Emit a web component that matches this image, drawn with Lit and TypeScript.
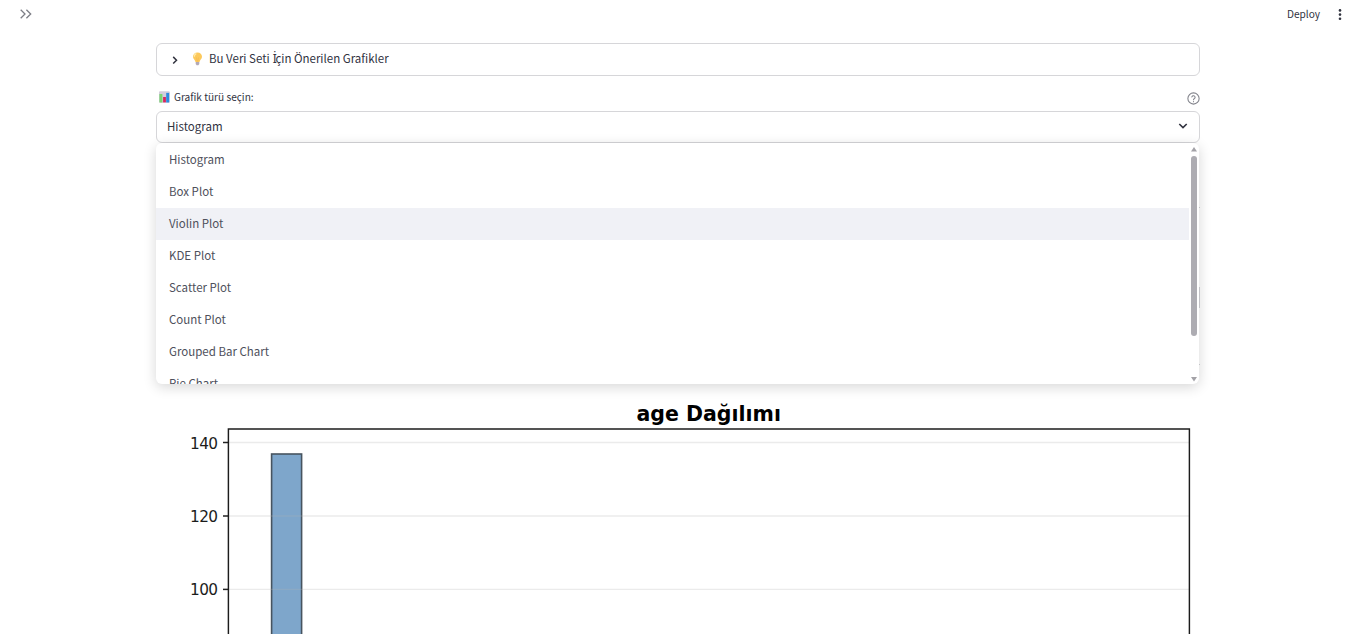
import { LitElement, html, css, svg } from "lit";
import { customElement, property, state } from "lit/decorators.js";
import { classMap } from "lit/directives/class-map.js";

@customElement("histogram-chart")
class HistogramChart extends LitElement {
  static styles = css`
    :host { display: block; height: 238px; overflow: hidden; }
    svg { display: block; }
    text { font-family: "DejaVu Sans", sans-serif; fill: #1c1c1c; }
    .title { font-size: 20.4px; font-weight: 700; fill: #000; }
    .tick { font-size: 15.3px; }
  `;
  render() {
    const ticks = [
      { label: "140", y: 46.5 },
      { label: "120", y: 120 },
      { label: "100", y: 193.4 },
    ];
    return html`<svg width="1044" height="238" viewBox="0 0 1044 238">
      <text class="title" x="480.5" y="25" textLength="144.5" lengthAdjust="spacingAndGlyphs">age Dağılımı</text>
      <rect x="115.6" y="58" width="30" height="200" fill="#7ea6cb" stroke="#47545f" stroke-width="1.6"></rect>
      ${ticks.map(
        (t) => svg`
          <line x1="73" x2="1033" y1=${t.y} y2=${t.y} stroke="#b0b0b0" stroke-opacity=".26" stroke-width="1.4"></line>
          <line x1="67" x2="72" y1=${t.y} y2=${t.y} stroke="#222" stroke-width="1.5"></line>
          <text class="tick" x="62" y=${t.y + 6} text-anchor="end" textLength="28">${t.label}</text>`
      )}
      <path d="M72.4 240V33H1033.4V240" fill="none" stroke="#1c1c1c" stroke-width="1.45"></path>
    </svg>`;
  }
}

@customElement("option-menu")
class OptionMenu extends LitElement {
  @property({ attribute: false }) options: string[] = [];
  @property() highlighted = "";
  static styles = css`
    :host {
      display: flex; box-sizing: border-box; height: 241px; overflow: hidden;
      background: #fff; border-radius: 6px; padding-top: 1px;
      box-shadow: 0 3px 13px rgba(0, 0, 0, 0.16);
    }
    .list { flex: 1; margin: 0; padding: 0; list-style: none; }
    .item {
      height: 32px; line-height: 30px; padding-left: 13px; font-size: 11.5px;
      color: #4e505b; white-space: nowrap;
    }
    .active { background: #f0f1f6; }
    .bar { width: 10px; display: flex; flex-direction: column; align-items: center; padding: 3px 0 2px; box-sizing: border-box; }
    .thumb { width: 6px; height: 180px; margin-top: 4px; border-radius: 3px; background: #adacb2; }
    .down { margin-top: auto; }
    svg { display: block; fill: #a3a2a7; }
  `;
  render() {
    return html`
      <ul class="list">
        ${this.options.map(
          (o) => html`<li class=${classMap({ item: true, active: o === this.highlighted })}>${o}</li>`
        )}
      </ul>
      <div class="bar">
        <svg width="6" height="5"><path d="M3 0L6 4.6H0Z"></path></svg>
        <div class="thumb"></div>
        <svg class="down" width="6" height="5"><path d="M0 0H6L3 4.6Z"></path></svg>
      </div>`;
  }
}

@customElement("app-root")
class AppRoot extends LitElement {
  @state() private selected = "Histogram";
  private options = [
    "Histogram", "Box Plot", "Violin Plot", "KDE Plot", "Scatter Plot",
    "Count Plot", "Grouped Bar Chart", "Pie Chart",
  ];
  static styles = css`
    :host {
      display: block; height: 634px; overflow: hidden; background: #fff; color: #31333f;
      font-family: "Noto Sans CJK SC", "Noto Sans", sans-serif;
    }
    svg { display: block; flex: none; }
    .header { height: 30px; display: flex; align-items: center; justify-content: space-between; padding: 0 20px 2px; box-sizing: border-box; }
    .actions { display: flex; align-items: center; gap: 17px; font-size: 10.1px; }
    .actions span { padding-bottom: 1px; }
    .main { width: 1044px; margin-left: 156px; padding-top: 13px; }
    .expander, .select {
      display: flex; align-items: center; box-sizing: border-box;
      border: 1px solid #d6d6d9; border-radius: 6px; font-size: 11.5px;
    }
    .expander { height: 33px; padding-left: 14px; }
    .expander span, .select span { padding-bottom: 2px; line-height: 17px; }
    .expander .dotted { font-family: "Noto Sans", sans-serif; font-size: 11.8px; line-height: 1; padding: 0; margin: 0 -1.3px 0 0.4px; }
    .bulb { margin: 0 6px 2px 13px; }
    .label { height: 18px; margin-top: 13px; padding-left: 3px; display: flex; align-items: center; font-size: 10.1px; }
    .label span { padding-bottom: 3px; }
    .label .chart { margin: 0 4px 2px 0; }
    .help { margin-left: auto; }
    .select { height: 32px; margin-top: 4px; padding: 0 11px 0 10px; justify-content: space-between; }
    .select svg { margin-bottom: 2px; }
    .stage { position: relative; padding-top: 253px; }
    option-menu { position: absolute; top: 0; left: 0; width: 1043px; }
    .behind { position: absolute; right: 0; width: 2px; background: #d3d3d8; }
    .b1 { top: 64px; height: 1px; width: 1px; }
    .b2 { top: 144px; height: 21px; }
    .b3 { top: 221px; height: 1px; width: 1px; }
  `;
  render() {
    return html`
      <header class="header">
        <svg width="12" height="10" viewBox="0 0 12 10" fill="none" stroke="#7d7e86" stroke-width="1.3"><path d="M.7 .8L5 5L.7 9.2M6.4 .8L10.7 5L6.4 9.2"></path></svg>
        <div class="actions">
          <span>Deploy</span>
          <svg width="8" height="12" viewBox="0 0 8 12" fill="#31333f"><circle cx="3" cy="2.4" r="1.3"></circle><circle cx="3" cy="6.6" r="1.3"></circle><circle cx="3" cy="10.7" r="1.3"></circle></svg>
        </div>
      </header>
      <main class="main">
        <section class="expander">
          <svg width="8" height="8" viewBox="0 0 8 8" fill="none" stroke="#31333f" stroke-width="1.5"><path d="M2.2 .9L5.5 4.2L2.2 7.5"></path></svg>
          <svg class="bulb" width="11" height="14" viewBox="0 0 11 14">
            <path d="M5.5 .5C2.8 .5 1 2.3 1 4.7C1 6.8 3 7.7 3.5 10H7.5C8 7.7 10 6.8 10 4.7C10 2.3 8.2 .5 5.5 .5Z" fill="#fcc95c"></path>
            <path d="M4.3 1.6C2.9 2.1 2.2 3.2 2.3 4.8" fill="none" stroke="#ffebaa" stroke-width="1.2"></path>
            <path d="M4.5 5.5L5.2 9.5M6.5 5.5L5.8 9.5" stroke="#f0b04a" stroke-width=".5"></path>
            <path d="M3.7 10H7.3V12L6.4 13.3H4.6L3.7 12Z" fill="#b2a9b7"></path>
          </svg>
          <span>Bu Veri Seti <span class="dotted">İ</span>çin Önerilen Grafikler</span>
        </section>
        <div class="label">
          <svg class="chart" width="11" height="12" viewBox="0 0 11 12">
            <rect x="0" y=".3" width="10.8" height="11.4" rx="1" fill="#d3cddc"></rect>
            <rect x=".4" y="3" width="3" height="8.5" fill="#7bd672"></rect>
            <rect x="4.1" y="6" width="2.8" height="5.4" fill="#d9265f"></rect>
            <rect x="7.2" y="1.9" width="3" height="9.6" fill="#2c8be0"></rect>
          </svg>
          <span>Grafik türü seçin:</span>
          <svg class="help" width="13" height="13" viewBox="0 0 24 24" fill="none" stroke="#83848c" stroke-width="2" stroke-linecap="round"><circle cx="12" cy="12" r="10.4"></circle><path d="M9 9a3.1 3.1 0 0 1 6 1c0 2-3 2.6-3 4.4M12 17.7v.1"></path></svg>
        </div>
        <div class="select">
          <span>${this.selected}</span>
          <svg width="10" height="8" viewBox="0 0 10 8" fill="none" stroke="#31333f" stroke-width="1.6"><path d="M1.3 2L5 5.6L8.7 2"></path></svg>
        </div>
        <div class="stage">
          <i class="behind b1"></i><i class="behind b2"></i><i class="behind b3"></i>
          <option-menu .options=${this.options} highlighted="Violin Plot"></option-menu>
          <histogram-chart></histogram-chart>
        </div>
      </main>`;
  }
}
